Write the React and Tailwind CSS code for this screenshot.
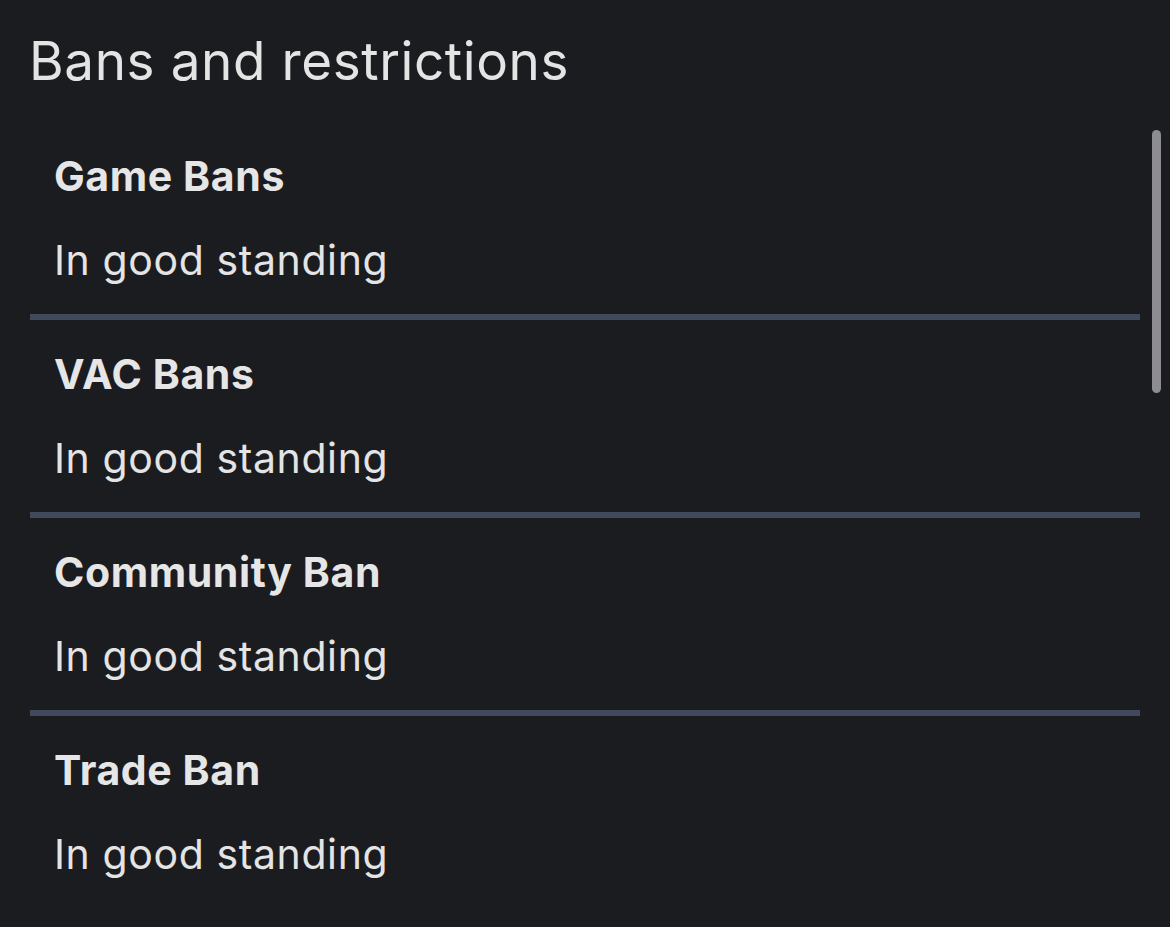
const bans = [
  { title: "Game Bans", status: "In good standing" },
  { title: "VAC Bans", status: "In good standing" },
  { title: "Community Ban", status: "In good standing" },
  { title: "Trade Ban", status: "In good standing" },
];

const BanRow = ({ title, status, last }) => (
  <div
    className={`${
      last ? "" : "border-b-[6px] border-[#414a5d]"
    } flex flex-col gap-[36px] pl-[24px] pt-[30px] pb-[30px]`}
  >
    <h3 className="text-[41px] leading-[48px] font-bold tracking-[0.6px] text-[#e6e6e7]">
      {title}
    </h3>
    <p className="text-[41px] leading-[48px] font-normal tracking-[0.6px] text-[#e4e4e5]">
      {status}
    </p>
  </div>
);

const App = () => {
  return (
    <main
      className="w-full h-[927px] overflow-hidden bg-[#1b1c20] text-[#e5e5e5]"
      style={{ fontFamily: "Inter, 'Liberation Sans', sans-serif" }}
    >
      <section className="flex flex-col">
        <h1 className="pl-[29px] pt-[29px] text-[53px] leading-[64px] font-normal tracking-[0.6px] text-[#e4e4e5]">
          Bans and restrictions
        </h1>
        <div className="relative mt-[29px] pl-[30px] pr-[30px]">
          <div className="flex flex-col">
            {bans.map((ban, index) => (
              <BanRow
                key={ban.title}
                title={ban.title}
                status={ban.status}
                last={index === bans.length - 1}
              />
            ))}
          </div>
          {/* scrollbar thumb */}
          <div className="absolute right-[9px] top-[8px] h-[263px] w-[9px] rounded-full bg-[#8d8d91]" />
        </div>
      </section>
    </main>
  );
};

export default App;
